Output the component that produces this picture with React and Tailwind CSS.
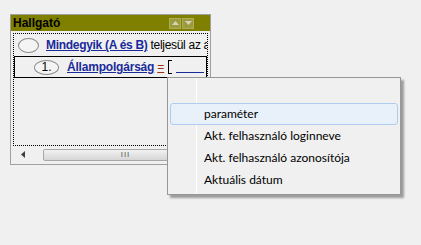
import React from 'react';

const menuItems = [
  'paraméter',
  'Akt. felhasználó loginneve',
  'Akt. felhasználó azonosítója',
  'Aktuális dátum',
];

function Arrow({ up }) {
  return (
    <div className="w-[12px] h-[11px] bg-[#9c9c3c] border border-[#adad55] flex items-center justify-center">
      <svg width="7" height="4" viewBox="0 0 7 4">
        <path d={up ? 'M0 4 L3.5 0 L7 4 Z' : 'M0 0 L3.5 4 L7 0 Z'} fill="#d4d4bc" />
      </svg>
    </div>
  );
}

export default function App() {
  return (
    <div
      className="relative w-[421px] h-[245px] bg-[#f0f0f0] overflow-hidden"
      style={{ fontFamily: '"Liberation Sans", Arial, sans-serif' }}
    >
      <div className="ml-[10px] mt-[14px] w-[201px] h-[151px] border border-[#a0a0a0] bg-[#f0f0f0]">
        <div className="h-[16px] bg-[#808000] flex items-center justify-between pl-[2px] pr-[16px]">
          <span className="text-[12px] font-bold text-black leading-none">Hallgató</span>
          <div className="flex gap-[1px]">
            <Arrow up />
            <Arrow />
          </div>
        </div>
        <div className="mx-[2px] mt-[2px] h-[113px] border border-dotted border-black overflow-hidden">
          <div className="h-[22px] flex items-center whitespace-nowrap text-[12px]">
            <div className="shrink-0 ml-[4px] w-[21px] h-[15px] rounded-[50%] border border-[#8a8a8a] bg-[#f4f4f4]" />
            <span className="ml-[7px] font-bold text-[#1a2a9a] underline tracking-[-0.3px]">Mindegyik (A és B)</span>
            <span className="ml-[3px] text-black tracking-[-0.3px]">teljesül az a</span>
          </div>
          <div className="h-[22px] border border-black flex items-center whitespace-nowrap text-[12px]">
            <div className="shrink-0 ml-[19px] w-[25px] h-[15px] rounded-[50%] border border-[#8a8a8a] bg-[#f4f4f4] flex items-center justify-center text-[12px] leading-none text-black">
              1.
            </div>
            <span className="ml-[8px] font-bold text-[#1a2a9a] underline tracking-[-0.2px]">Állampolgárság</span>
            <span className="ml-[3px] text-[#a03010] underline">=</span>
            <span className="shrink-0 ml-[4px] w-[4px] h-[14px] border-l border-t border-b border-black" />
            <span className="shrink-0 ml-[4px] w-[28px] h-[12px] border-b border-[#1a2a9a]" />
          </div>
        </div>
        <div className="mx-[2px] mt-[2px] h-[13px] flex items-center">
          <div className="w-[20px] flex items-center justify-center">
            <svg width="4" height="7" viewBox="0 0 4 7">
              <path d="M4 0 L0 3.5 L4 7 Z" fill="#404040" />
            </svg>
          </div>
          <div className="ml-[10px] h-[12px] flex-1 rounded-[2px] border border-[#a8a8a8] bg-gradient-to-b from-[#f2f2f2] to-[#d6d6d6] flex items-center justify-center">
            <span className="text-[8px] leading-none text-[#555] tracking-[1px]">III</span>
          </div>
        </div>
      </div>

      <div className="absolute left-[167px] top-[77px] w-[234px] h-[118px] bg-[#f0f0f0] border border-[#979797] shadow-[3px_3px_2px_rgba(0,0,0,0.35)]">
        <div className="absolute left-[28px] top-0 bottom-0 w-[1px] bg-[#e2e3e3] border-r border-white" />
        <div className="relative pt-[25px] px-[2px]" style={{ fontFamily: 'Lato, "Open Sans", sans-serif' }}>
          {menuItems.map((item, i) => (
            <div
              key={item}
              className={
                'h-[22px] flex items-center pl-[33px] text-[12px] text-black rounded-[3px] border ' +
                (i === 0 ? 'border-[#aeccee] bg-[#e8f0fa]' : 'border-transparent')
              }
            >
              {item}
            </div>
          ))}
        </div>
      </div>
    </div>
  );
}
